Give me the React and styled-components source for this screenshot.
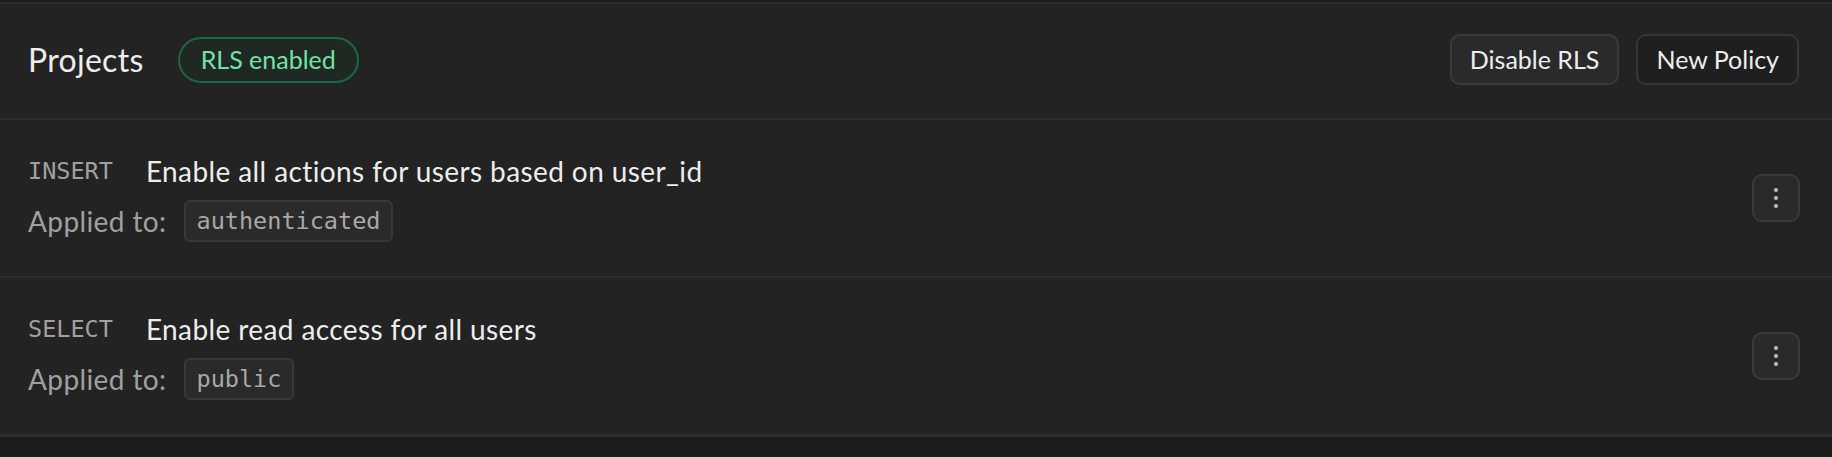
import React from "react";
import styled, { createGlobalStyle } from "styled-components";

const GlobalStyle = createGlobalStyle`
  html, body {
    margin: 0;
    padding: 0;
    background: #1c1c1c;
  }
  body {
    font-family: "Lato", "Noto Sans", sans-serif;
    -webkit-font-smoothing: antialiased;
  }
`;

const Panel = styled.div`
  margin-top: 2px;
  background: #232323;
  border-top: 2px solid #2c2c2c;
  border-bottom: 3px solid #2c2c2c;
`;

const Header = styled.header`
  display: flex;
  align-items: center;
  height: 114px;
  padding: 0 33px 0 28px;
  border-bottom: 2px solid #2c2c2c;
`;

const Title = styled.h1`
  margin: -3px 34px 0 0;
  font-size: 32px;
  font-weight: 400;
  letter-spacing: 0.3px;
  color: #ededed;
`;

const Badge = styled.span`
  display: inline-flex;
  align-items: center;
  box-sizing: border-box;
  height: 46px;
  margin-top: -3px;
  padding: 0 21px 1px;
  border-radius: 999px;
  border: 2px solid #1d6843;
  background: #1f2823;
  color: #6fe3a8;
  font-size: 25px;
`;

const Actions = styled.div`
  margin-left: auto;
  margin-top: -3px;
  display: flex;
  gap: 17px;
`;

const Button = styled.button`
  box-sizing: border-box;
  height: 51px;
  padding: 0 18px 2px;
  border-radius: 10px;
  border: 2px solid ${(p) => (p.$filled ? "#3a3a3a" : "#363636")};
  background: ${(p) => (p.$filled ? "#2a2a2a" : "#1f1f1f")};
  color: #ededed;
  font-family: inherit;
  font-size: 25px;
  cursor: pointer;
`;

const Row = styled.div`
  display: flex;
  align-items: center;
  height: 156px;
  padding: 0 32px 0 28px;
  & + & {
    border-top: 2px solid #2c2c2c;
  }
`;

const Info = styled.div`
  display: flex;
  flex-direction: column;
  gap: 12px;
`;

const Line = styled.div`
  display: flex;
  align-items: center;
`;

const Method = styled.span`
  font-family: "DejaVu Sans Mono", "Liberation Mono", monospace;
  font-size: 23.5px;
  color: #a0a0a0;
  margin-right: 33px;
`;

const PolicyName = styled.span`
  font-size: 28px;
  letter-spacing: 0.4px;
  line-height: 34px;
  color: #ededed;
`;

const Label = styled.span`
  font-size: 28px;
  letter-spacing: 0.4px;
  color: #a0a0a0;
`;

const Chip = styled.code`
  display: inline-flex;
  align-items: center;
  box-sizing: border-box;
  height: 42px;
  margin-left: 17px;
  padding: 0 11px;
  border-radius: 6px;
  border: 2px solid #383838;
  background: #2a2a2a;
  font-family: "DejaVu Sans Mono", "Liberation Mono", monospace;
  font-size: 23.5px;
  color: #a8a8a8;
`;

const MenuButton = styled.button`
  margin-left: auto;
  width: 48px;
  height: 48px;
  box-sizing: border-box;
  display: flex;
  align-items: center;
  justify-content: center;
  border-radius: 10px;
  border: 2px solid #3a3a3a;
  background: #2a2a2a;
  color: #bdbdbd;
  padding: 0;
  cursor: pointer;
`;

const Dots = () => (
  <svg width="6" height="22" viewBox="0 0 6 22" fill="currentColor">
    <circle cx="3" cy="3" r="2.1" />
    <circle cx="3" cy="11" r="2.1" />
    <circle cx="3" cy="19" r="2.1" />
  </svg>
);

const policies = [
  { method: "INSERT", name: "Enable all actions for users based on user_id", role: "authenticated" },
  { method: "SELECT", name: "Enable read access for all users", role: "public" },
];

export default function App() {
  return (
    <>
      <GlobalStyle />
      <Panel>
        <Header>
          <Title>Projects</Title>
          <Badge>RLS enabled</Badge>
          <Actions>
            <Button $filled>Disable RLS</Button>
            <Button>New Policy</Button>
          </Actions>
        </Header>
        {policies.map((p) => (
          <Row key={p.method}>
            <Info>
              <Line>
                <Method>{p.method}</Method>
                <PolicyName>{p.name}</PolicyName>
              </Line>
              <Line>
                <Label>Applied to:</Label>
                <Chip>{p.role}</Chip>
              </Line>
            </Info>
            <MenuButton aria-label="More">
              <Dots />
            </MenuButton>
          </Row>
        ))}
      </Panel>
    </>
  );
}
